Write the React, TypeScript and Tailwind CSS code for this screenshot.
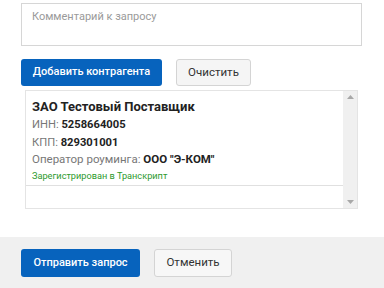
import React from "react";

export default function App() {
  const font = { fontFamily: 'Roboto, "Noto Sans", sans-serif' };
  return (
    <div className="w-[384px] h-[288px] bg-white flex flex-col overflow-hidden" style={font}>
      <div className="pl-[21px] pt-[3px] h-[237px]">
        <div className="w-[341px] h-[43px] border border-[#d6d6d6] px-[10px] pt-[5px] text-[11px] text-[#9a9a9a] leading-[16px]">
          Комментарий к запросу
        </div>
        <div className="flex mt-[13px] gap-[14px]">
          <button className="w-[141px] h-[27px] rounded-[3px] bg-[#0763bd] text-white text-[11px] font-medium flex items-center justify-center">
            Добавить контрагента
          </button>
          <button className="w-[75px] h-[27px] rounded-[3px] bg-[#f5f5f5] border border-[#d4d4d4] text-[#333] text-[11.5px] flex items-center justify-center">
            Очистить
          </button>
        </div>
        <div className="ml-[4px] mt-[4px] w-[333px] h-[119px] border border-[#e4e4e4] flex">
          <div className="flex-1 flex flex-col">
            <div className="h-[95px] border-b border-[#e0e0e0] pl-[6px] pt-[7px] text-[#333]">
              <div className="text-[13px] font-bold leading-[18px] text-[#222]">ЗАО Тестовый Поставщик</div>
              <div className="text-[11.2px] leading-[17.5px] text-[#777]">ИНН: <span className="font-bold text-[#222]">5258664005</span></div>
              <div className="text-[11.2px] leading-[17.5px] text-[#777]">КПП: <span className="font-bold text-[#222]">829301001</span></div>
              <div className="text-[11.5px] leading-[17.5px] text-[#777]">Оператор роуминга: <span className="font-bold text-[#222]">ООО "Э-КОМ"</span></div>
              <div className="text-[9.2px] leading-[13px] text-[#2e9a2e]">Зарегистрирован в Транскрипт</div>
            </div>
            <div className="flex-1" />
          </div>
          <div className="w-[14px] bg-[#f0f0f0] flex flex-col justify-between items-center py-[4px]">
            <svg width="7" height="4" viewBox="0 0 7 4"><path d="M0 4L3.5 0L7 4Z" fill="#a8a8a8" /></svg>
            <svg width="7" height="4" viewBox="0 0 7 4"><path d="M0 0L3.5 4L7 0Z" fill="#a8a8a8" /></svg>
          </div>
        </div>
      </div>
      <div className="flex-1 bg-[#f0f0f0] pl-[21px] pt-[12px] flex gap-[14px]">
        <button className="w-[119px] h-[28px] rounded-[3px] bg-[#0763bd] text-white text-[11px] font-medium flex items-center justify-center">
          Отправить запрос
        </button>
        <button className="w-[78px] h-[28px] rounded-[3px] bg-[#f7f7f7] border border-[#d4d4d4] text-[#333] text-[11.5px] flex items-center justify-center">
          Отменить
        </button>
      </div>
    </div>
  );
}
